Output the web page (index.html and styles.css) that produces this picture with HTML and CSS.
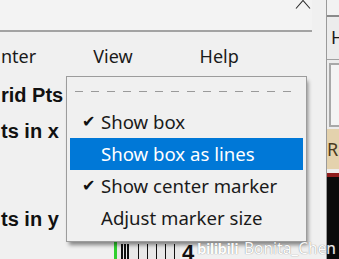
FILE: index.html
```html
<!DOCTYPE html>
<html>
<head>
<meta charset="utf-8">
<link rel="stylesheet" href="styles.css">
</head>
<body>
<div class="screen">
  <div class="main">
    <div class="titlebar">
      <svg class="close" width="16" height="9" viewBox="0 0 16 9"><path d="M1 8.5 L8 0.5 L15 8.5" fill="none" stroke="#2b2b2b" stroke-width="1.1"/></svg>
    </div>
    <div class="menubar">
      <span class="mb-item mb-first">nter</span>
      <span class="mb-item mb-view">View</span>
      <span class="mb-item mb-help">Help</span>
    </div>
    <div class="content">
      <div class="label l1">rid Pts</div>
      <div class="label l2">ts in x</div>
      <div class="label l3">ts in y</div>
      <div class="widget">
        <div class="bars">
          <i class="b thick"></i><i class="b thick"></i><i class="b thick"></i>
          <i class="b gap"></i><i class="b gap"></i><i class="b gap"></i><i class="b gap"></i><i class="b gap"></i>
        </div>
        <span class="num">4</span>
      </div>
    </div>
  </div>
  <div class="side">
    <div class="side-top"></div>
    <div class="side-h">H</div>
    <div class="side-box"></div>
    <div class="side-ru">Ru</div>
    <div class="side-red"></div>
    <div class="side-black"></div>
  </div>

  <div class="popup">
    <div class="tearoff"></div>
    <div class="item"><span class="check">✔</span><span>Show box</span></div>
    <div class="item active"><span class="check"></span><span>Show box as lines</span></div>
    <div class="item"><span class="check">✔</span><span>Show center marker</span></div>
    <div class="item"><span class="check"></span><span>Adjust marker size</span></div>
  </div>

  <div class="watermark"><span class="bili">bilibili</span><span class="user">Bonita_Chen</span></div>
</div>
</body>
</html>
```
FILE: styles.css
```css
* { box-sizing: border-box; }
html, body {
  margin: 0;
  padding: 0;
  width: 339px;
  height: 259px;
  overflow: hidden;
  background: #f0f0f0;
}
.screen {
  position: relative;
  display: flex;
  width: 339px;
  height: 259px;
  overflow: hidden;
  font-family: "Noto Sans", "Liberation Sans", sans-serif;
  color: #1a1a1a;
}
.main {
  width: 326px;
  flex: none;
  display: flex;
  flex-direction: column;
  background: #f0f0f0;
}
.titlebar {
  height: 37px;
  width: 312px;
  background: #f3f3f3;
  border-bottom: 2px solid #a3a3a3;
  display: flex;
  justify-content: flex-end;
  align-items: flex-start;
  padding-right: 1px;
}
.close {
  display: block;
}
.menubar {
  height: 40px;
  padding-top: 8px;
  display: flex;
  align-items: center;
  font-size: 18px;
  line-height: 32px;
  white-space: nowrap;
}
.mb-first { margin-left: 1px; }
.mb-view { margin-left: 57px; }
.mb-help { margin-left: 67px; }
.content {
  display: flex;
  flex-direction: column;
  padding-top: 5px;
  font-family: "Liberation Sans", Arial, sans-serif;
}
.label {
  height: 36px;
  line-height: 36px;
  font-weight: bold;
  font-size: 20px;
  color: #111;
  white-space: nowrap;
  padding-left: 1px;
}
.l3 { margin-top: 52px; }
.widget {
  margin-top: 2px;
  margin-left: 114px;
  height: 20px;
  display: flex;
  align-items: flex-start;
}
.bars {
  width: 66px;
  height: 20px;
  border-left: 3px solid #2fcf2f;
  border-top: 2px solid #2fcf2f;
  background: #e8e8e8;
  display: flex;
  padding-left: 4px;
  padding-top: 3px;
}
.b {
  display: block;
  height: 16px;
  background: #111;
}
.b.thick { width: 2px; margin-right: 1px; }
.b.gap { width: 1px; margin-left: 8px; }
.num {
  margin-left: 2px;
  font-weight: bold;
  font-size: 22px;
  line-height: 28px;
  color: #111;
}
.side {
  flex: 1;
  display: flex;
  flex-direction: column;
  border-left: 1px solid #9a9a9a;
  background: #ececec;
}
.side-top {
  height: 17px;
  background: #f2f2f2;
  border-bottom: 2px solid #8a8a8a;
}
.side-h {
  height: 43px;
  font-size: 18px;
  line-height: 40px;
  padding-left: 4px;
  border-bottom: 1px solid #a0a0a0;
}
.side-box {
  height: 64px;
  margin-top: 3px;
  margin-left: 2px;
  border: 2px solid #a8a8a8;
  border-right: none;
  background: #f4f4f4;
}
.side-ru {
  height: 40px;
  margin-top: 2px;
  background: #e4d2ad;
  font-size: 18px;
  line-height: 40px;
  color: #4a3a20;
  white-space: nowrap;
}
.side-red {
  height: 4px;
  margin-top: 4px;
  background: #8e1c1c;
}
.side-black {
  flex: 1;
  background: #0a0a0a;
}
.popup {
  position: absolute;
  left: 66px;
  top: 76px;
  width: 241px;
  height: 166px;
  background: #f0f0f0;
  border: 1px solid #9c9c9c;
  padding: 3px;
  box-shadow: 2px 4px 4px -1px rgba(0, 0, 0, 0.45);
  font-family: "Noto Sans", "Liberation Sans", sans-serif;
  font-size: 18.6px;
  color: #1a1a1a;
}
.tearoff {
  height: 26px;
  padding-top: 11px;
  margin: 0 4px 0 5px;
}
.tearoff::before {
  content: "";
  display: block;
  height: 1px;
  background: repeating-linear-gradient(90deg, #9a9a9a 0 8px, transparent 8px 16px);
}
.item {
  height: 32px;
  display: flex;
  align-items: center;
  line-height: 32px;
  white-space: nowrap;
}
.item.active {
  background: #0078d7;
  color: #fff;
}
.check {
  width: 31px;
  flex: none;
  padding-left: 12px;
  font-family: "DejaVu Sans", sans-serif;
  font-size: 16px;
  color: #111;
}
.watermark {
  position: absolute;
  left: 197px;
  top: 237px;
  display: flex;
  align-items: baseline;
  gap: 6px;
  font-family: "Noto Sans", "Liberation Sans", sans-serif;
  font-size: 15.5px;
  color: #fff;
  white-space: nowrap;
  text-shadow: 0 0 1px #666;
  opacity: 0.92;
}
.bili { font-weight: bold; letter-spacing: -0.6px; font-size: 15px; }
```
